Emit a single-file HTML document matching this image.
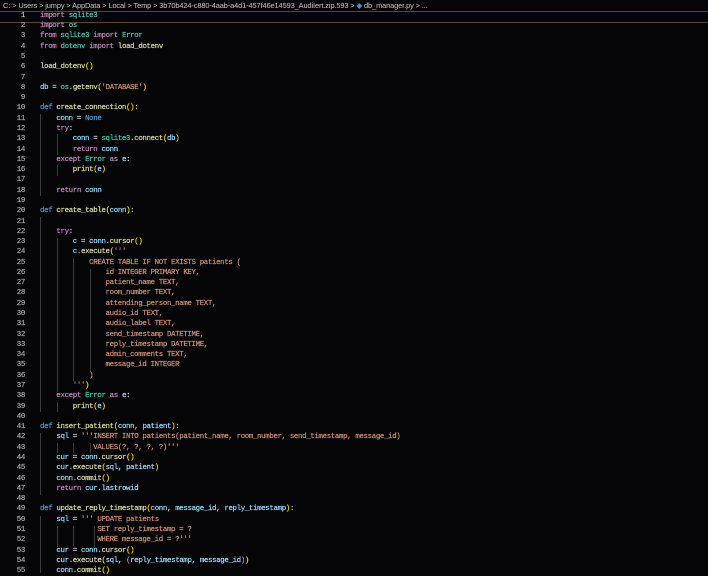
<!DOCTYPE html>
<html><head><meta charset="utf-8"><style>
body{margin:0;width:708px;height:573px;background:#050507;overflow:hidden;position:relative;font-family:"Liberation Mono",monospace;}
.bc{position:absolute;left:3px;top:1px;font:7.4px "Liberation Sans",sans-serif;color:#c8c8c8;white-space:pre;line-height:10px;letter-spacing:-0.1px}
.hl{position:absolute;left:0;right:0;top:11px;height:10px;border-top:1px solid #5e4430;border-bottom:1px solid #5e4430}
.ln{position:absolute;left:0;width:25px;top:10.9px;text-align:right;font-size:7.4px;line-height:10.28px;color:#a8a8a8;white-space:pre;-webkit-text-stroke:0.2px #a8a8a8;letter-spacing:-0.3px}
.code{position:absolute;left:40px;top:10.9px;font-size:7.4px;letter-spacing:-0.34px;line-height:10.28px;color:#d4d4d4;white-space:pre;margin:0;font-family:"Liberation Mono",monospace;-webkit-text-stroke:0.2px currentColor}
.code span{-webkit-text-stroke:0.2px currentColor}
.g{position:absolute;width:1px;background:#3a3a3a}
.k{color:#c586c0}.b{color:#569cd6}.f{color:#dcdcaa}.v{color:#9cdcfe}.s{color:#ce9178}.c{color:#4ec9b0}.y{color:#ffd700}.p{color:#da70d6}
</style></head><body>
<div class="bc">C: &gt; Users &gt; jumpy &gt; AppData &gt; Local &gt; Temp &gt; 3b70b424-c880-4aab-a4d1-457f46e14593_AudiIert.zip.593 &gt; <span style="color:#4a8fd0">◆</span> db_manager.py &gt; ...</div>
<div class="hl"></div>
<div class="g" style="left:40px;top:114px;height:82px"></div>
<div class="g" style="left:40px;top:217px;height:195px"></div>
<div class="g" style="left:40px;top:433px;height:62px"></div>
<div class="g" style="left:40px;top:516px;height:57px"></div>
<div class="g" style="left:57px;top:134px;height:21px"></div>
<div class="g" style="left:57px;top:165px;height:11px"></div>
<div class="g" style="left:57px;top:238px;height:154px"></div>
<div class="g" style="left:57px;top:402px;height:10px"></div>
<div class="g" style="left:57px;top:443px;height:10px"></div>
<div class="g" style="left:57px;top:526px;height:21px"></div>
<div class="g" style="left:73px;top:258px;height:123px"></div>
<div class="g" style="left:73px;top:443px;height:10px"></div>
<div class="g" style="left:73px;top:526px;height:21px"></div>
<div class="g" style="left:90px;top:269px;height:103px"></div>
<div class="g" style="left:90px;top:443px;height:10px"></div>
<div class="g" style="left:94px;top:526px;height:21px"></div>
<div class="ln"><span style="color:#e0e0e0">1</span>
2
3
4
5
6
7
8
9
10
11
12
13
14
15
16
17
18
19
20
21
22
23
24
25
26
27
28
29
30
31
32
33
34
35
36
37
38
39
40
41
42
43
44
45
46
47
48
49
50
51
52
53
54
55</div>
<pre class="code"><span class="k">import</span> <span class="c">sqlite3</span>
<span class="k">import</span> <span class="c">os</span>
<span class="k">from</span> <span class="c">sqlite3</span> <span class="k">import</span> <span class="c">Error</span>
<span class="k">from</span> <span class="c">dotenv</span> <span class="k">import</span> <span class="f">load_dotenv</span>

<span class="f">load_dotenv</span><span class="y">()</span>

<span class="v">db</span> = <span class="c">os</span>.<span class="f">getenv</span><span class="y">(</span><span class="s">'DATABASE'</span><span class="y">)</span>

<span class="b">def</span> <span class="f">create_connection</span><span class="y">()</span>:
    <span class="v">conn</span> = <span class="b">None</span>
    <span class="k">try</span>:
        <span class="v">conn</span> = <span class="c">sqlite3</span>.<span class="f">connect</span><span class="y">(</span><span class="v">db</span><span class="y">)</span>
        <span class="k">return</span> <span class="v">conn</span>
    <span class="k">except</span> <span class="c">Error</span> <span class="k">as</span> <span class="v">e</span>:
        <span class="f">print</span><span class="y">(</span><span class="v">e</span><span class="y">)</span>

    <span class="k">return</span> <span class="v">conn</span>

<span class="b">def</span> <span class="f">create_table</span><span class="y">(</span><span class="v">conn</span><span class="y">)</span>:

    <span class="k">try</span>:
        <span class="v">c</span> = <span class="v">conn</span>.<span class="f">cursor</span><span class="y">()</span>
        <span class="v">c</span>.<span class="f">execute</span><span class="y">(</span><span class="s">'''
            CREATE TABLE IF NOT EXISTS patients (
                id INTEGER PRIMARY KEY,
                patient_name TEXT,
                room_number TEXT,
                attending_person_name TEXT,
                audio_id TEXT,
                audio_label TEXT,
                send_timestamp DATETIME,
                reply_timestamp DATETIME,
                admin_comments TEXT,
                message_id INTEGER
            )
        '''</span><span class="y">)</span>
    <span class="k">except</span> <span class="c">Error</span> <span class="k">as</span> <span class="v">e</span>:
        <span class="f">print</span><span class="y">(</span><span class="v">e</span><span class="y">)</span>

<span class="b">def</span> <span class="f">insert_patient</span><span class="y">(</span><span class="v">conn</span>, <span class="v">patient</span><span class="y">)</span>:
    <span class="v">sql</span> = <span class="s">'''INSERT INTO patients(patient_name, room_number, send_timestamp, message_id)
             VALUES(?, ?, ?, ?)'''</span>
    <span class="v">cur</span> = <span class="v">conn</span>.<span class="f">cursor</span><span class="y">()</span>
    <span class="v">cur</span>.<span class="f">execute</span><span class="y">(</span><span class="v">sql</span>, <span class="v">patient</span><span class="y">)</span>
    <span class="v">conn</span>.<span class="f">commit</span><span class="y">()</span>
    <span class="k">return</span> <span class="v">cur</span>.<span class="v">lastrowid</span>

<span class="b">def</span> <span class="f">update_reply_timestamp</span><span class="y">(</span><span class="v">conn</span>, <span class="v">message_id</span>, <span class="v">reply_timestamp</span><span class="y">)</span>:
    <span class="v">sql</span> = <span class="s">''' UPDATE patients
              SET reply_timestamp = ?
              WHERE message_id = ?'''</span>
    <span class="v">cur</span> = <span class="v">conn</span>.<span class="f">cursor</span><span class="y">()</span>
    <span class="v">cur</span>.<span class="f">execute</span><span class="y">(</span><span class="v">sql</span>, <span class="p">(</span><span class="v">reply_timestamp</span>, <span class="v">message_id</span><span class="p">)</span><span class="y">)</span>
    <span class="v">conn</span>.<span class="f">commit</span><span class="y">()</span></pre>
</body></html>
